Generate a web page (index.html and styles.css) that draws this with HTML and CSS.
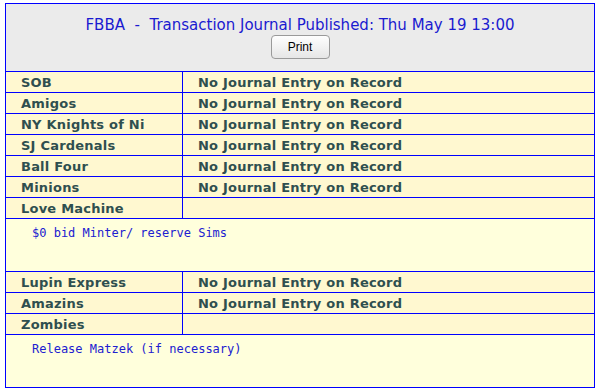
FILE: index.html
```html
<!DOCTYPE html>
<html>
<head>
<meta charset="utf-8">
<link rel="stylesheet" href="styles.css">
</head>
<body>
<table class="journal">
  <colgroup><col class="col-team"><col class="col-entry"></colgroup>
  <tr>
    <td class="head" colspan="2">
      <div class="title">FBBA  -  Transaction Journal Published: Thu May 19 13:00</div>
      <button class="print">Print</button>
    </td>
  </tr>
  <tr><td class="team">SOB</td><td class="entry">No Journal Entry on Record</td></tr>
  <tr><td class="team">Amigos</td><td class="entry">No Journal Entry on Record</td></tr>
  <tr><td class="team">NY Knights of Ni</td><td class="entry">No Journal Entry on Record</td></tr>
  <tr><td class="team">SJ Cardenals</td><td class="entry">No Journal Entry on Record</td></tr>
  <tr><td class="team">Ball Four</td><td class="entry">No Journal Entry on Record</td></tr>
  <tr><td class="team">Minions</td><td class="entry">No Journal Entry on Record</td></tr>
  <tr><td class="team">Love Machine</td><td class="entry"></td></tr>
  <tr><td class="note" colspan="2">$0 bid Minter/ reserve Sims</td></tr>
  <tr><td class="team">Lupin Express</td><td class="entry">No Journal Entry on Record</td></tr>
  <tr><td class="team">Amazins</td><td class="entry">No Journal Entry on Record</td></tr>
  <tr><td class="team">Zombies</td><td class="entry"></td></tr>
  <tr><td class="note" colspan="2">Release Matzek (if necessary)</td></tr>
</table>
</body>
</html>
```
FILE: styles.css
```css
html, body {
  background: #ffffff;
}
body {
  margin: 3px 0 0 5px;
  font-family: "DejaVu Sans", Verdana, sans-serif;
}
.journal {
  border-collapse: collapse;
  width: 590px;
  table-layout: fixed;
}
.col-team {
  width: 177px;
}
.journal td {
  border: 1px solid #0000ff;
  padding: 0;
}
.head {
  background: #ebebeb;
  text-align: center;
  height: 67px;
  vertical-align: top;
}
.title {
  white-space: pre;
  color: #1a1ad0;
  font-size: 15px;
  line-height: 20px;
  padding-top: 11px;
}
.print {
  margin-top: 0;
  width: 59px;
  height: 24px;
  font-family: "Liberation Sans", Arial, sans-serif;
  font-size: 12px;
  color: #000;
  background: linear-gradient(#fefefe, #e6e6e6);
  border: 1px solid #9a9a9a;
  border-radius: 4px;
  padding: 0;
}
.team, .entry {
  background: #fff8d0;
  color: #2f4f4f;
  font-weight: bold;
  font-size: 13px;
  letter-spacing: 0.22px;
  line-height: 16px;
  height: 20px;
  box-sizing: border-box;
  padding: 3px 0 1px 15px !important;
  white-space: nowrap;
  overflow: hidden;
}
.note {
  background: #ffffdc;
  color: #2020d0;
  font-family: "DejaVu Sans Mono", "Liberation Mono", monospace;
  font-size: 12px;
  line-height: 14px;
  height: 45px;
  vertical-align: top;
  padding: 7px 0 0 26px !important;
  white-space: pre;
}
```
